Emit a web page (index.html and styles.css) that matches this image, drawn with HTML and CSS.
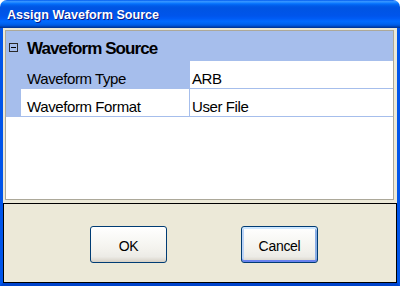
FILE: index.html
```html
<!DOCTYPE html>
<html>
<head>
<meta charset="utf-8">
<link rel="stylesheet" href="styles.css">
</head>
<body>
<div class="window">
  <div class="titlebar"><span class="title">Assign Waveform Source</span></div>
  <div class="client">
    <div class="grid">
      <div class="category">
        <span class="toggle"><span class="minus"></span></span>
        <span class="cat-label">Waveform Source</span>
      </div>
      <div class="row">
        <div class="margin"></div>
        <div class="label selected">Waveform Type</div>
        <div class="value">ARB</div>
      </div>
      <div class="row">
        <div class="margin"></div>
        <div class="label">Waveform Format</div>
        <div class="value">User File</div>
      </div>
    </div>
    <div class="footer">
      <button class="btn">OK</button>
      <button class="btn default">Cancel</button>
    </div>
  </div>
</div>
</body>
</html>
```
FILE: styles.css
```css
html, body {
  margin: 0;
  padding: 0;
  background: #ffffff;
}
body {
  width: 400px;
  height: 286px;
  overflow: hidden;
  font-family: "Liberation Sans", Arial, sans-serif;
}
.window {
  width: 400px;
  height: 286px;
  display: flex;
  flex-direction: column;
  box-sizing: border-box;
}
.titlebar {
  height: 28px;
  flex: none;
  border-radius: 7px 7px 0 0;
  background: linear-gradient(to bottom, #0058EE 0%, #3593FF 5%, #288EFF 8%, #127DFF 11%, #036FFC 14%, #0262EE 18%, #0057E5 24%, #0054E3 30%, #0055EB 56%, #005BF5 66%, #026AFE 76%, #0062EF 86%, #0052D6 92%, #0040AB 96%, #003092 100%);
  display: flex;
  align-items: center;
  padding-left: 7px;
  box-sizing: border-box;
}
.title {
  color: #ffffff;
  font-weight: bold;
  font-size: 12.6px;
  text-shadow: 1px 1px 0 #0A1883;
  padding-top: 1px;
}
.client {
  flex: 1;
  display: flex;
  flex-direction: column;
  background: #ECE9D8;
  border-left: 3px solid #0055EA;
  border-right: 3px solid #0055EA;
  border-bottom: 3px solid #0044CC;
  padding-top: 2px;
  box-sizing: border-box;
}
.grid {
  margin-left: 2px;
  width: 389px;
  height: 170px;
  flex: none;
  box-sizing: border-box;
  border: 1px solid #ACA899;
  background: #ffffff;
  font-size: 15px;
  letter-spacing: -0.4px;
  color: #000000;
}
.category {
  height: 30px;
  background: #A6BEEC;
  display: flex;
  align-items: flex-end;
  padding-bottom: 2px;
  box-sizing: border-box;
}
.toggle {
  width: 9px;
  height: 9px;
  box-sizing: border-box;
  border: 1px solid #2A2A2A;
  margin-left: 3px;
  margin-right: 9px;
  align-self: flex-start;
  margin-top: 12px;
  display: flex;
  align-items: center;
  justify-content: center;
}
.minus {
  width: 5px;
  height: 1px;
  background: #000000;
}
.cat-label {
  font-weight: bold;
  font-size: 17px;
  letter-spacing: -0.9px;
}
.row {
  display: grid;
  grid-template-columns: 15px 168px 1fr;
  height: 28px;
  box-sizing: border-box;
}
.margin {
  background: #A6BEEC;
}
.label {
  padding-left: 6px;
  padding-bottom: 1px;
  display: flex;
  align-items: flex-end;
  border-bottom: 1px solid #A6BEEC;
}
.label.selected {
  background: #A6BEEC;
}
.value {
  padding-left: 2px;
  padding-bottom: 1px;
  display: flex;
  align-items: flex-end;
  border-left: 1px solid #A6BEEC;
  border-bottom: 1px solid #A6BEEC;
}
.footer {
  margin-top: 3px;
  flex: 1;
  border: 1px solid #000000;
  display: flex;
  align-items: flex-start;
  padding-left: 86px;
  padding-top: 22px;
  gap: 74px;
  box-sizing: border-box;
}
.btn {
  width: 77px;
  height: 37px;
  border: 1px solid #003C74;
  border-radius: 3px;
  background: linear-gradient(to bottom, #FFFFFF 0%, #F4F3EE 60%, #ECEBE6 85%, #D6D0C5 100%);
  font-family: "Liberation Sans", Arial, sans-serif;
  font-size: 14px;
  letter-spacing: -0.3px;
  color: #000000;
  padding: 2px 0 0 0;
}
.btn.default {
  box-shadow: inset 0 2px 0 #CEE7FF, inset 0 -2px 0 #6982EE, inset 2px 0 0 #BCD4F6, inset -2px 0 0 #89ADE4;
}
```
